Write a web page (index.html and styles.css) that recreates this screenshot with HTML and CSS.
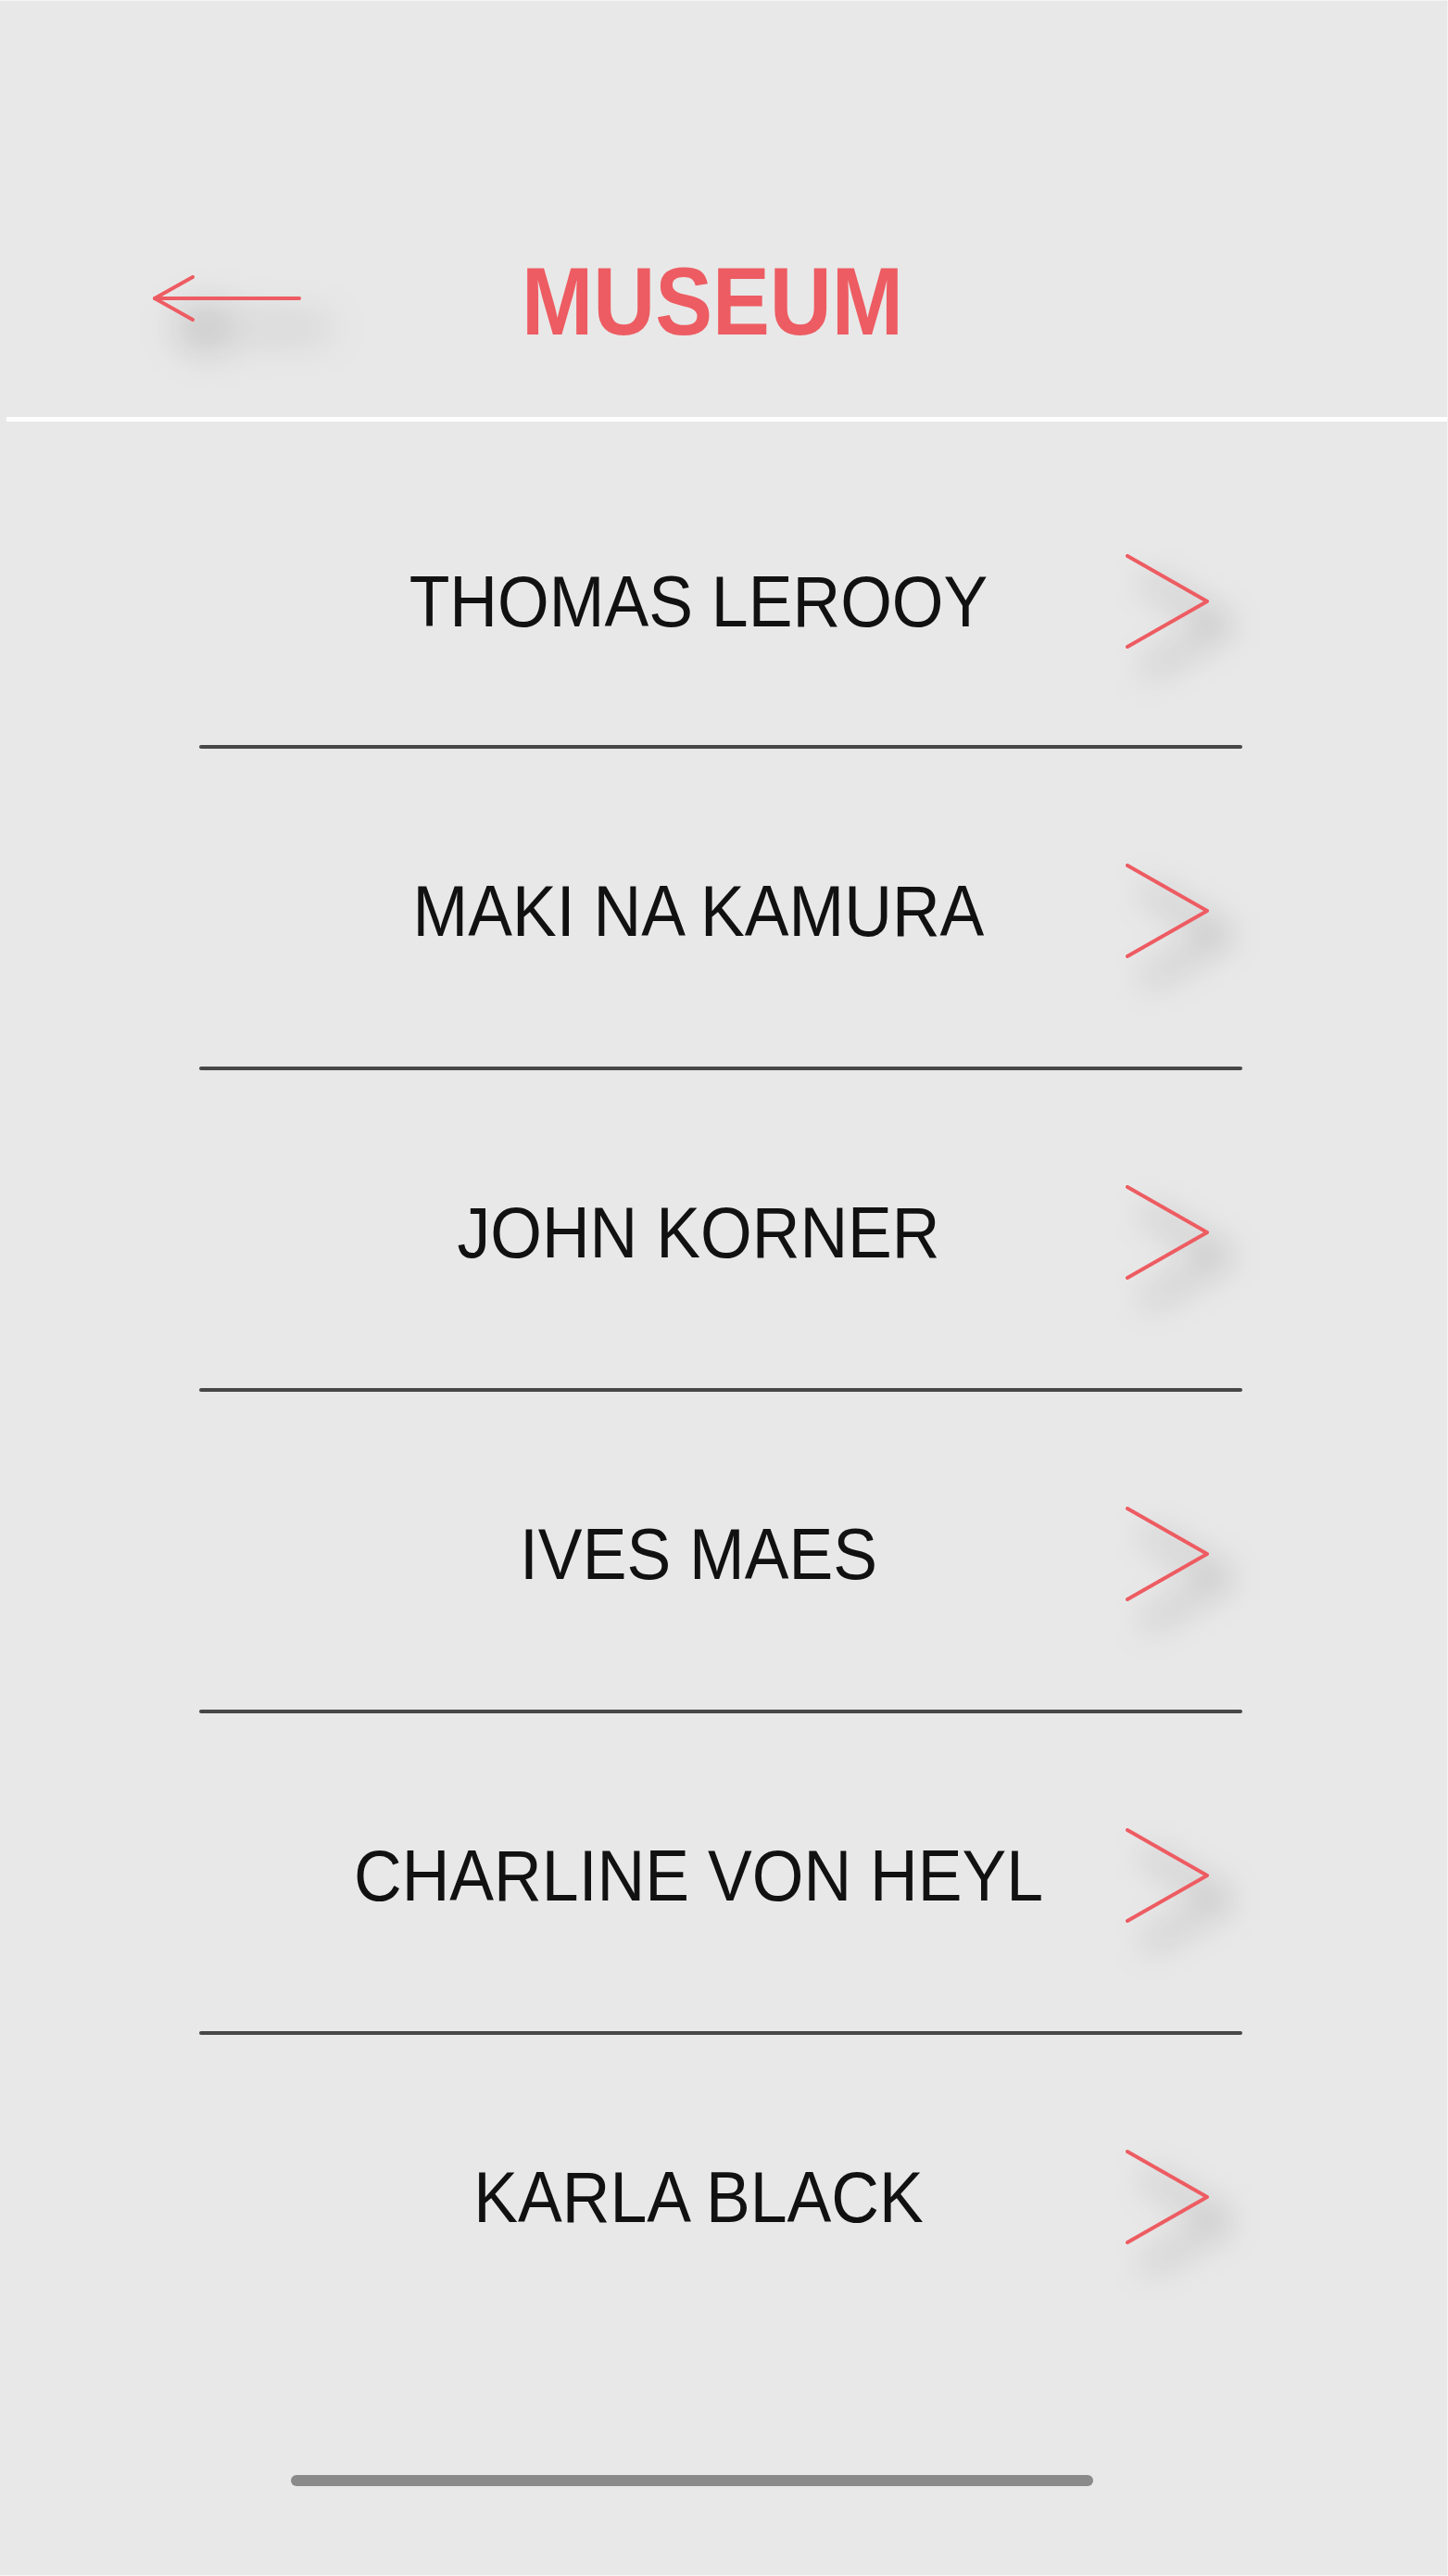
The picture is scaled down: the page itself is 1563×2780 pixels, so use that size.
FILE: index.html
```html
<!DOCTYPE html>
<html lang="en">
<head>
<meta charset="utf-8">
<title>Museum</title>
<link rel="stylesheet" href="styles.css">
</head>
<body>
<div class="screen">
  <header class="header">
    <div class="topbar">
      <svg class="back" width="162" height="56" viewBox="0 0 162 56" aria-hidden="true">
        <polyline points="45,5 4,28 45,51" />
        <line x1="4" y1="28" x2="160" y2="28" />
      </svg>
      <h1 class="title">MUSEUM</h1>
    </div>
  </header>
  <div class="rule"></div>
  <ul class="list">
    <li class="row row--first">
      <span class="name">THOMAS LEROOY</span>
      <svg class="chev" width="92" height="104" viewBox="0 0 92 104" aria-hidden="true"><polyline points="3,3 89,52 3,101" /></svg>
    </li>
    <li class="sep"></li>
    <li class="row">
      <span class="name">MAKI NA KAMURA</span>
      <svg class="chev" width="92" height="104" viewBox="0 0 92 104" aria-hidden="true"><polyline points="3,3 89,52 3,101" /></svg>
    </li>
    <li class="sep"></li>
    <li class="row">
      <span class="name">JOHN KORNER</span>
      <svg class="chev" width="92" height="104" viewBox="0 0 92 104" aria-hidden="true"><polyline points="3,3 89,52 3,101" /></svg>
    </li>
    <li class="sep"></li>
    <li class="row">
      <span class="name">IVES MAES</span>
      <svg class="chev" width="92" height="104" viewBox="0 0 92 104" aria-hidden="true"><polyline points="3,3 89,52 3,101" /></svg>
    </li>
    <li class="sep"></li>
    <li class="row">
      <span class="name">CHARLINE VON HEYL</span>
      <svg class="chev" width="92" height="104" viewBox="0 0 92 104" aria-hidden="true"><polyline points="3,3 89,52 3,101" /></svg>
    </li>
    <li class="sep"></li>
    <li class="row">
      <span class="name">KARLA BLACK</span>
      <svg class="chev" width="92" height="104" viewBox="0 0 92 104" aria-hidden="true"><polyline points="3,3 89,52 3,101" /></svg>
    </li>
  </ul>
  <footer class="footer">
    <div class="home-bar"></div>
  </footer>
</div>
</body>
</html>
```

FILE: styles.css
```css
html, body {
  margin: 0;
  padding: 0;
}

body {
  background: #f4f4f4;
  font-family: "Liberation Sans", Arial, sans-serif;
}

.screen {
  margin-top: 1px;
  width: 1562px;
  height: 2778px;
  background: #e8e8e8;
  display: flex;
  flex-direction: column;
}

.header {
  height: 449px;
  box-sizing: border-box;
  padding-top: 266px;
  padding-left: 163px;
}

.topbar {
  display: flex;
  align-items: center;
  height: 110px;
}

.back {
  display: block;
  flex: none;
  overflow: visible;
  filter: drop-shadow(30px 32px 22px rgba(0, 0, 0, 0.6));
}

.back polyline,
.back line,
.chev polyline {
  fill: none;
  stroke: #ed5c62;
  stroke-width: 4;
  stroke-linecap: round;
  stroke-linejoin: round;
}

.title {
  margin: 6px 0 0 238px;
  font-size: 103px;
  line-height: 1;
  font-weight: 700;
  letter-spacing: 0;
  color: #ed5c62;
  transform: scaleX(0.9);
  transform-origin: left center;
  white-space: nowrap;
}

.rule {
  height: 5px;
  margin-left: 7px;
  background: #ffffff;
}

.list {
  list-style: none;
  margin: 0;
  padding: 6px 0 0 215px;
  width: 1126px;
}

.row {
  height: 343px;
  box-sizing: border-box;
  padding-top: 7px;
  display: grid;
  grid-template-columns: 1fr 92px 35px;
  align-items: center;
}

.row--first {
  padding-top: 33px;
}

.name {
  grid-column: 1 / 3;
  grid-row: 1;
  padding-right: 14px;
  text-align: center;
  font-size: 77px;
  line-height: 1;
  color: #111111;
  white-space: nowrap;
  transform: scaleX(0.93);
}

.chev {
  grid-column: 2;
  grid-row: 1;
  display: block;
  overflow: visible;
  filter: drop-shadow(20px 26px 18px rgba(0, 0, 0, 0.6));
}

.sep {
  height: 4px;
  background: #474747;
  border-radius: 2px;
}

.footer {
  margin-top: auto;
  padding: 0 0 96px 314px;
}

.home-bar {
  width: 866px;
  height: 12px;
  border-radius: 6px;
  background: #8a8a8a;
}
```
